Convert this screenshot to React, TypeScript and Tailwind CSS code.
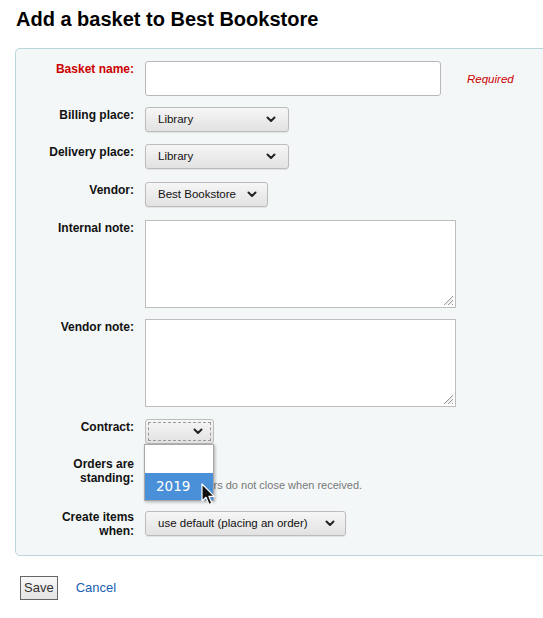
import React from "react";

const Chevron = () => (
  <svg width="10" height="7" viewBox="0 0 10 7">
    <path d="M1.5 1.5 L5 5 L8.5 1.5" fill="none" stroke="#222" strokeWidth="2" strokeLinecap="round" strokeLinejoin="round" />
  </svg>
);

const selectCls =
  "h-[25px] flex items-center justify-between pl-[12px] rounded-[3px] border border-[#bcbcbc] bg-gradient-to-b from-[#f6f6f6] to-[#e2e2e2] shadow-[0_1px_1px_rgba(0,0,0,0.08)] text-[11.5px] text-[#111]";

const Label = ({ children, red = false }: { children: React.ReactNode; red?: boolean }) => (
  <div
    className={`w-[118px] shrink-0 text-right font-bold text-[12px] leading-[14px] pt-[1px] ${red ? "text-[#cc0000]" : "text-[#111]"}`}
  >
    {children}
  </div>
);

const Grip = () => (
  <svg width="12" height="12" viewBox="0 0 12 12" className="absolute right-[1px] bottom-[1px]">
    <path d="M11 2 L2 11 M11 6 L6 11 M11 10 L10 11" stroke="#9a9a9a" strokeWidth="1" fill="none" />
    <path d="M11 3.5 L3.5 11 M11 7.5 L7.5 11" stroke="#d8d8d8" strokeWidth="1" fill="none" />
  </svg>
);

const TextArea = () => (
  <div className="relative w-[311px] h-[88px] bg-white border border-[#bdbdbd]">
    <Grip />
  </div>
);

export default function App() {
  return (
    <div
      className="w-[543px] h-[618px] overflow-hidden bg-white"
      style={{ fontFamily: '"Liberation Sans", Arial, sans-serif' }}
    >
      <h1 className="pl-[16px] pt-[5px] text-[20px] leading-[28px] font-bold text-black">
        Add a basket to Best Bookstore
      </h1>

      <div className="ml-[15px] mt-[15px] w-[580px] h-[508px] rounded-[5px] border border-[#b9d7da] bg-[#f4f7f8] pt-[12px]">
        {/* Basket name */}
        <div className="flex gap-[11px]">
          <Label red>Basket name:</Label>
          <div className="w-[296px] h-[35px] bg-white border border-[#b8b8b8] rounded-[3px]" />
          <div className="ml-[15px] pt-[10px] italic text-[11.5px] text-[#cc0000]">Required</div>
        </div>

        {/* Billing */}
        <div className="flex gap-[11px] mt-[11px]">
          <Label>Billing place:</Label>
          <div className={`${selectCls} w-[144px] pr-[12px]`}>
            <span>Library</span>
            <Chevron />
          </div>
        </div>

        {/* Delivery */}
        <div className="flex gap-[11px] mt-[12px]">
          <Label>Delivery place:</Label>
          <div className={`${selectCls} w-[144px] pr-[12px]`}>
            <span>Library</span>
            <Chevron />
          </div>
        </div>

        {/* Vendor */}
        <div className="flex gap-[11px] mt-[13px]">
          <Label>Vendor:</Label>
          <div className={`${selectCls} w-[123px] pr-[10px]`}>
            <span>Best Bookstore</span>
            <Chevron />
          </div>
        </div>

        {/* Internal note */}
        <div className="flex gap-[11px] mt-[13px]">
          <Label>Internal note:</Label>
          <TextArea />
        </div>

        {/* Vendor note */}
        <div className="flex gap-[11px] mt-[11px]">
          <Label>Vendor note:</Label>
          <TextArea />
        </div>

        {/* Contract */}
        <div className="flex gap-[11px] mt-[12px]">
          <Label>Contract:</Label>
          <div className="w-[69px] h-[25px] rounded-[3px] border border-[#bcbcbc] bg-gradient-to-b from-[#f6f6f6] to-[#e2e2e2] p-[2px]">
            <div className="w-full h-full border border-dashed border-[#9a9a9a] flex items-center justify-end pr-[7px]">
              <Chevron />
            </div>
          </div>
        </div>

        {/* Orders are standing */}
        <div className="flex gap-[11px] mt-[12px] relative">
          <Label>
            Orders are
            <br />
            standing:
          </Label>
          <div className="pt-[2px]">
            <div className="w-[13px] h-[13px] border border-[#888] bg-white rounded-[2px]" />
            <div className="mt-[7px] text-[11px] leading-[14px] text-[#777]">
              Standing orders do not close when received.
            </div>
          </div>
          {/* dropdown list overlay */}
          <div className="absolute left-[128px] top-[-12px] w-[70px] h-[57px] bg-white border border-[#a8a8a8] shadow-[1px_1px_3px_rgba(0,0,0,0.3)] flex flex-col">
            <div className="h-[28px]" />
            <div
              className="flex-1 bg-[#4a90d9] text-white text-[13.5px] pl-[11px] flex items-center"
              style={{ fontFamily: '"DejaVu Sans", "Open Sans", sans-serif' }}
            >
              2019
            </div>
          </div>
          {/* cursor */}
          <svg
            width="16"
            height="24"
            viewBox="0 0 16 24"
            className="absolute left-[185px] top-[27px]"
          >
            <path
              d="M1 1 L1 18 L5 14.3 L8 21.5 L10.8 20.3 L7.9 13.3 L13.3 13.3 Z"
              fill="#111"
              stroke="#fff"
              strokeWidth="1.2"
              strokeLinejoin="round"
            />
          </svg>
        </div>

        {/* Create items when */}
        <div className="flex gap-[11px] mt-[17px]">
          <Label>
            Create items
            <br />
            when:
          </Label>
          <div className={`${selectCls} mt-[2px] w-[201px] pr-[10px]`}>
            <span>use default (placing an order)</span>
            <Chevron />
          </div>
        </div>
      </div>

      <div className="flex items-center pl-[20px] mt-[20px] gap-[18px]">
        <button className="h-[24px] px-[3px] border border-[#666] bg-gradient-to-b from-[#f8f8f8] to-[#e4e4e4] text-[13px] text-[#333] leading-[20px]">
          Save
        </button>
        <a className="text-[13px] text-[#1a5fb4]">Cancel</a>
      </div>
    </div>
  );
}
